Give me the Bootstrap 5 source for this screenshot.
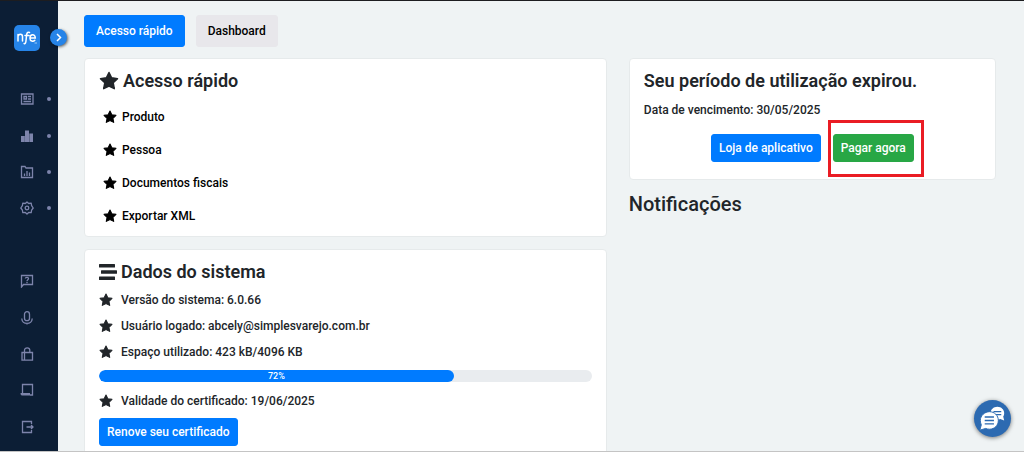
<!DOCTYPE html>
<html lang="pt-BR">
<head>
<meta charset="utf-8">
<meta name="viewport" content="width=device-width, initial-scale=1">
<title>NFe - Acesso rápido</title>
<link href="https://cdn.jsdelivr.net/npm/bootstrap@5.3.0/dist/css/bootstrap.min.css" rel="stylesheet">
<style>
  :root { --ink: #212529; --blue: #007bff; --green: #28a745; --navy: #0c1e35; }
  body { font-family: Roboto, "Liberation Sans", sans-serif; font-size: 12px; line-height: 18px; font-weight: 500; color: var(--ink); background: #eff3f4; }
  .shell { border-top: 1px solid #1d1d20; border-bottom: 1px solid #c4c4c4; }
  .sidebar { width: 58px; flex: none; background: var(--navy); padding: 24px 0 6px; color: #7d84ab; z-index: 2; }
  .brand { display: block; width: 26px; height: 26px; margin: 0 auto 30px 14px; }
  .toggle { position: absolute; top: 28px; right: -9px; width: 17px; height: 17px; border: 0; border-radius: 50%; background: #2684e8; box-shadow: 1px 1px 3px rgba(0,0,0,.6); }
  .side-link { color: inherit; padding-left: 20px; min-height: 24px; flex: 1 1 0; }
  .side-link svg { width: 14px; height: 14px; fill: none; stroke: currentColor; stroke-width: 1.3; }
  .dot { width: 4px; height: 4px; border-radius: 50%; background: currentColor; margin-left: 13px; }
  .workspace { padding: 14px 17px 0 15px; }
  .workspace .row { --bs-gutter-x: 22px; }
  .tabs { gap: 11px; padding-left: 11px; margin-bottom: 11px; }
  .btn { --bs-btn-font-size: 12px; --bs-btn-font-weight: 500; --bs-btn-line-height: 18px; --bs-btn-border-radius: 3px; --bs-btn-padding-x: 7px; --bs-btn-padding-y: 4px; }
  .btn-tab { --bs-btn-padding-x: 11px; --bs-btn-padding-y: 6px; }
  .btn-primary { --bs-btn-bg: var(--blue); --bs-btn-border-color: var(--blue); }
  .btn-success { --bs-btn-bg: var(--green); --bs-btn-border-color: var(--green); }
  .btn-quiet { --bs-btn-bg: #e8e7eb; --bs-btn-border-color: #e8e7eb; --bs-btn-color: #000; }
  .card { --bs-card-border-color: #e6eaeb; --bs-card-border-radius: 4px; --bs-card-inner-border-radius: 3px; --bs-card-spacer-x: 14px; --bs-card-spacer-y: 11px; --bs-card-color: var(--ink); }
  .card + .card { margin-top: 12px; }
  .title { font-size: 18px; line-height: 22px; font-weight: 600; margin: 0; gap: 4px; }
  .notes { font-size: 20px; line-height: 24px; font-weight: 500; margin: 12px 0 0; }
  .star { width: 14px; height: 14px; flex: none; fill: currentColor; }
  .star-lg { width: 20px; height: 20px; }
  .quick { color: #000; gap: 5px; padding-left: 4px; }
  .quick-list { gap: 15px; margin-top: 16px; }
  .facts { gap: 8px; }
  .fact { gap: 8px; }
  .due { margin: 9px 0 15px; }
  .progress { --bs-progress-height: 12px; --bs-progress-border-radius: 6px; --bs-progress-bg: #e9ecef; --bs-progress-bar-bg: var(--blue); --bs-progress-font-size: 9px; margin: 9px 0 10px; }
  .progress-bar { border-radius: 6px; }
  .actions { gap: 12px; padding-bottom: 6px; }
  .marked::after { content: ""; position: absolute; inset: -14px -10px -15px -5px; border: 3px solid #ea1c24; pointer-events: none; }
  .chat { position: fixed; right: 13px; bottom: 15px; width: 37px; height: 37px; border: 0; border-radius: 50%; background: #2c6ab1; box-shadow: 0 1px 4px rgba(0,0,0,.5); z-index: 3; }
</style>
</head>
<body>
<svg class="d-none" aria-hidden="true">
  <symbol id="star" viewBox="0 0 20 20"><path d="M10 1.500l2.600 5.300 5.900.9-4.300 4.100 1.100 5.900L10 15l-5.300 2.700 1.100-5.900-4.300-4.100 5.900-.9z" stroke="currentColor" stroke-width="1.500" stroke-linejoin="round"/></symbol>
</svg>
<div class="shell d-flex vh-100">
  <aside class="sidebar position-relative d-flex flex-column">
    <a class="brand" href="#" aria-label="nfe">
      <svg width="26" height="26" viewBox="0 0 26 26"><rect width="26" height="26" rx="5" fill="#2684e8"/><g fill="none" stroke="#fff" stroke-width="1.500" stroke-linecap="round"><path d="M4 16V9.500M4 11.500c.5-3 4.500-3 4.500 0V16M15.500 7.500c-2.400-.8-2.800 1-3 3.500l-.6 5.500c-.2 1.800-.8 2.400-1.800 2M11 10.500h4M16 13h5.300c-.2-4.400-5.300-4.100-5.300.2 0 3.300 3.300 3.700 4.800 2"/></g><path d="M20.500 18h2.500" stroke="#9ccaf7"/></svg>
    </a>
    <button class="toggle p-0 d-flex align-items-center justify-content-center" type="button" aria-label="Expandir menu"><svg width="9" height="9" viewBox="0 0 9 9" fill="none" stroke="#fff" stroke-width="1.500"><path d="M3 1l3.500 3.500L3 8"/></svg></button>
    <nav class="d-flex flex-column flex-fill">
      <a class="side-link d-flex align-items-center" href="#" aria-label="Cadastros"><svg viewBox="0 0 14 14"><path d="M1.500 2h11.500v10H1.500zM4 4.500h2.500V7H4zM8 4.500h3M8 7h3M3.500 9.500h7.500"/></svg><span class="dot"></span></a>
      <a class="side-link d-flex align-items-center" href="#" aria-label="Vendas"><svg viewBox="0 0 14 14"><path fill="currentColor" stroke="none" d="M1 7h3.800v6H1zM5 1.500h4V13H5zM9.300 4.500H13V13H9.300z"/></svg><span class="dot"></span></a>
      <a class="side-link d-flex align-items-center" href="#" aria-label="Relatórios"><svg viewBox="0 0 14 14"><path d="M1.500 12.500v-11H5l1 1.500h6.500v9.500zM4.500 11V8.500M7 11V6M9.500 11V7.500"/></svg><span class="dot"></span></a>
      <a class="side-link d-flex align-items-center" href="#" aria-label="Configurações"><svg viewBox="0 0 14 14"><path stroke-linejoin="round" d="M7 1l1.700 1.500 2.500-.3.400 2.400L13.200 7l-1.600 2.200-.4 2.500-2.500-.2L7 13l-1.700-1.500-2.500.2-.4-2.500L.8 7l1.600-2.400.4-2.400 2.500.3z"/><circle cx="7" cy="7" r="1.800"/></svg><span class="dot"></span></a>
      <span class="side-link"></span>
      <a class="side-link d-flex align-items-center" href="#" aria-label="Ajuda"><svg viewBox="0 0 14 14"><path d="M1.500 13V1.500h11v9h-9z"/><path d="M5.300 4.500c.2-1.600 3.400-1.500 3.200.2C8.400 5.800 7 5.800 7 7.200M7 8v1.200"/></svg></a>
      <a class="side-link d-flex align-items-center" href="#" aria-label="Voz"><svg viewBox="0 0 14 14"><rect x="4.500" y=".7" width="5" height="9" rx="2.500"/><path d="M1.800 7.500c0 6.500 10.400 6.500 10.400 0M7 12.300v1.200"/></svg></a>
      <a class="side-link d-flex align-items-center" href="#" aria-label="Loja"><svg viewBox="0 0 14 14"><path d="M2 5.500h10.500v7.700H2zM4.500 5.500V3.300c0-3.200 5.300-3.200 5.300 0v2.200M4.500 6v7"/></svg></a>
      <a class="side-link d-flex align-items-center" href="#" aria-label="Notas"><svg viewBox="0 0 14 14"><path d="M2.500 10V1.500h10V12H10"/><path fill="currentColor" stroke="none" d="M.5 10h9.500v2.500H2c-1 0-1.500-.8-1.500-2.500z"/></svg></a>
      <a class="side-link d-flex align-items-center" href="#" aria-label="Sair"><svg viewBox="0 0 14 14"><path d="M11.500 4V1.500h-9v11h9V10M6.500 7h6.500M11 5l2 2-2 2"/></svg></a>
    </nav>
  </aside>

  <main class="workspace flex-fill overflow-hidden">
    <div class="tabs d-flex">
      <button class="btn btn-primary btn-tab" type="button">Acesso rápido</button>
      <button class="btn btn-quiet btn-tab" type="button">Dashboard</button>
    </div>
    <div class="row mx-0">
      <div class="col-7">
        <section class="card">
          <div class="card-body">
            <h2 class="title d-flex align-items-center"><svg class="star star-lg"><use href="#star"/></svg>Acesso rápido</h2>
            <div class="quick-list d-flex flex-column">
              <a class="quick d-flex align-items-center text-decoration-none" href="#"><svg class="star"><use href="#star"/></svg>Produto</a>
              <a class="quick d-flex align-items-center text-decoration-none" href="#"><svg class="star"><use href="#star"/></svg>Pessoa</a>
              <a class="quick d-flex align-items-center text-decoration-none" href="#"><svg class="star"><use href="#star"/></svg>Documentos fiscais</a>
              <a class="quick d-flex align-items-center text-decoration-none" href="#"><svg class="star"><use href="#star"/></svg>Exportar XML</a>
            </div>
          </div>
        </section>
        <section class="card">
          <div class="card-body">
            <h2 class="title d-flex align-items-center"><svg width="18" height="18" viewBox="0 0 18 18" fill="currentColor"><rect y="1" width="16" height="3.500" rx=".5"/><rect x="2" y="7.200" width="16" height="3.500" rx=".5"/><rect y="13.500" width="16" height="3.500" rx=".5"/></svg>Dados do sistema</h2>
            <div class="facts d-flex flex-column mt-2">
              <div class="fact d-flex align-items-center"><svg class="star"><use href="#star"/></svg>Versão do sistema: 6.0.66</div>
              <div class="fact d-flex align-items-center"><svg class="star"><use href="#star"/></svg>Usuário logado: abcely@simplesvarejo.com.br</div>
              <div class="fact d-flex align-items-center"><svg class="star"><use href="#star"/></svg>Espaço utilizado: 423 kB/4096 KB</div>
            </div>
            <div class="progress" role="progressbar" aria-label="Espaço utilizado" aria-valuenow="72" aria-valuemin="0" aria-valuemax="100"><div class="progress-bar" style="width:72%">72%</div></div>
            <div class="fact d-flex align-items-center mb-2"><svg class="star"><use href="#star"/></svg>Validade do certificado: 19/06/2025</div>
            <button class="btn btn-primary" type="button">Renove seu certificado</button>
          </div>
        </section>
      </div>
      <div class="col-5">
        <section class="card">
          <div class="card-body">
            <h2 class="title">Seu período de utilização expirou.</h2>
            <p class="due">Data de vencimento: 30/05/2025</p>
            <div class="actions d-flex justify-content-center">
              <button class="btn btn-primary" type="button">Loja de aplicativo</button>
              <div class="marked position-relative"><button class="btn btn-success" type="button">Pagar agora</button></div>
            </div>
          </div>
        </section>
        <h2 class="notes">Notificações</h2>
      </div>
    </div>
  </main>
</div>
<button class="chat p-0" type="button" aria-label="Abrir chat">
  <svg width="37" height="37" viewBox="0 0 38 38"><path fill="#fff" d="M24 7c4 0 7 3 7 6.500 0 1.500-.5 2.800-1 3.500l1 4-4-1.500c-1 .5-2 .5-3 .5-4 0-7-3-7-6.500S20 7 24 7z"/><path stroke="#2c6ab1" stroke-width="1.300" d="M20 12h8M22 15h6"/><path fill="#fff" stroke="#2c6ab1" d="M16 12c5 0 9 4 9 9s-4 9-9 9c-1.500 0-3-.3-4-.8L6 31l1.500-5.500C7 24.500 6.500 22.800 6.500 21c0-5 4.500-9 9.500-9z"/><path stroke="#2c6ab1" stroke-width="1.500" d="M11 17.500h9.500M11 21h9.500M11 24.500h9.500"/></svg>
</button>
<script src="https://cdn.jsdelivr.net/npm/bootstrap@5.3.0/dist/js/bootstrap.bundle.min.js"></script>
</body>
</html>
